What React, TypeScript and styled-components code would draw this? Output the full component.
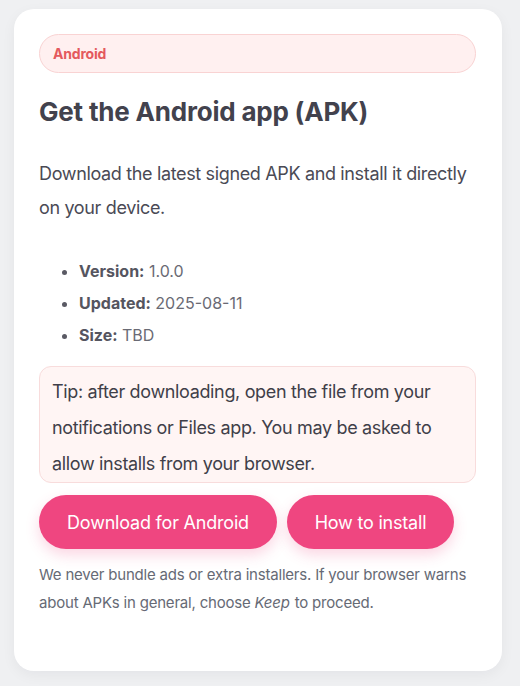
import React from "react";
import styled, { createGlobalStyle } from "styled-components";

const Global = createGlobalStyle`
  html, body { margin: 0; padding: 0; background: #eff0f2; }
  body { font-family: Inter, "Noto Sans", sans-serif; -webkit-font-smoothing: antialiased; }
  * { box-sizing: border-box; }
`;

const Page = styled.div`
  padding: 9px 18px 15px 14px;
`;

const Card = styled.section`
  background: #ffffff;
  border-radius: 20px;
  padding: 25px 26px 54px 25px;
  box-shadow: 0 4px 14px rgba(20, 20, 40, 0.05);
`;

const Badge = styled.div`
  height: 39px;
  display: flex;
  align-items: center;
  padding: 0 13px;
  border-radius: 999px;
  background: #fff0f0;
  border: 1px solid #f9d3d3;
  color: #e45a5e;
  font-size: 14px;
  font-weight: 700;
  letter-spacing: -0.2px;
`;

const Title = styled.h1`
  margin: 24px 0 0;
  font-size: 26px;
  line-height: 30px;
  font-weight: 700;
  color: #42424d;
  letter-spacing: -0.2px;
`;

const Lead = styled.p`
  margin: 30px 0 0;
  font-size: 18px;
  line-height: 34px;
  color: #4a4a55;
  letter-spacing: -0.35px;
`;

const Meta = styled.ul`
  margin: 30px 0 0;
  padding: 0 0 0 40px;
  font-size: 16px;
  line-height: 32px;
  color: #6a6a74;
  letter-spacing: 0;
  li::marker { color: #5a5a64; }
`;

const Label = styled.strong`
  font-weight: 700;
  color: #55555f;
`;

const Tip = styled.div`
  margin-top: 15px;
  padding: 7px 12px 0;
  background: #fff5f4;
  border: 1px solid #f8dcdc;
  border-radius: 12px;
  font-size: 18px;
  line-height: 36px;
  color: #3f3f49;
  letter-spacing: -0.35px;
`;

const Actions = styled.div`
  display: flex;
  gap: 10px;
  margin-top: 12px;
`;

const Button = styled.button<{ $w: number }>`
  width: ${(p) => p.$w}px;
  height: 54px;
  border: none;
  border-radius: 999px;
  background: #ef4680;
  color: #ffffff;
  font-family: inherit;
  font-size: 18px;
  letter-spacing: -0.2px;
  box-shadow: 0 6px 14px rgba(239, 70, 128, 0.22);
  cursor: pointer;
`;

const Note = styled.p`
  margin: 12px 0 0;
  font-size: 15px;
  line-height: 28px;
  color: #666a75;
  letter-spacing: -0.2px;
  em { margin-right: 1px; }
`;

export default function App() {
  return (
    <>
      <Global />
      <Page>
        <Card>
          <Badge>Android</Badge>
          <Title>Get the Android app (APK)</Title>
          <Lead>Download the latest signed APK and install it directly on your device.</Lead>
          <Meta>
            <li><Label>Version:</Label> 1.0.0</li>
            <li><Label>Updated:</Label> 2025-08-11</li>
            <li><Label>Size:</Label> TBD</li>
          </Meta>
          <Tip>
            Tip: after downloading, open the file from your notifications or Files app. You may be asked to allow installs from your browser.
          </Tip>
          <Actions>
            <Button $w={238}>Download for Android</Button>
            <Button $w={167}>How to install</Button>
          </Actions>
          <Note>
            We never bundle ads or extra installers. If your browser warns about APKs in general, choose <em>Keep</em> to proceed.
          </Note>
        </Card>
      </Page>
    </>
  );
}
